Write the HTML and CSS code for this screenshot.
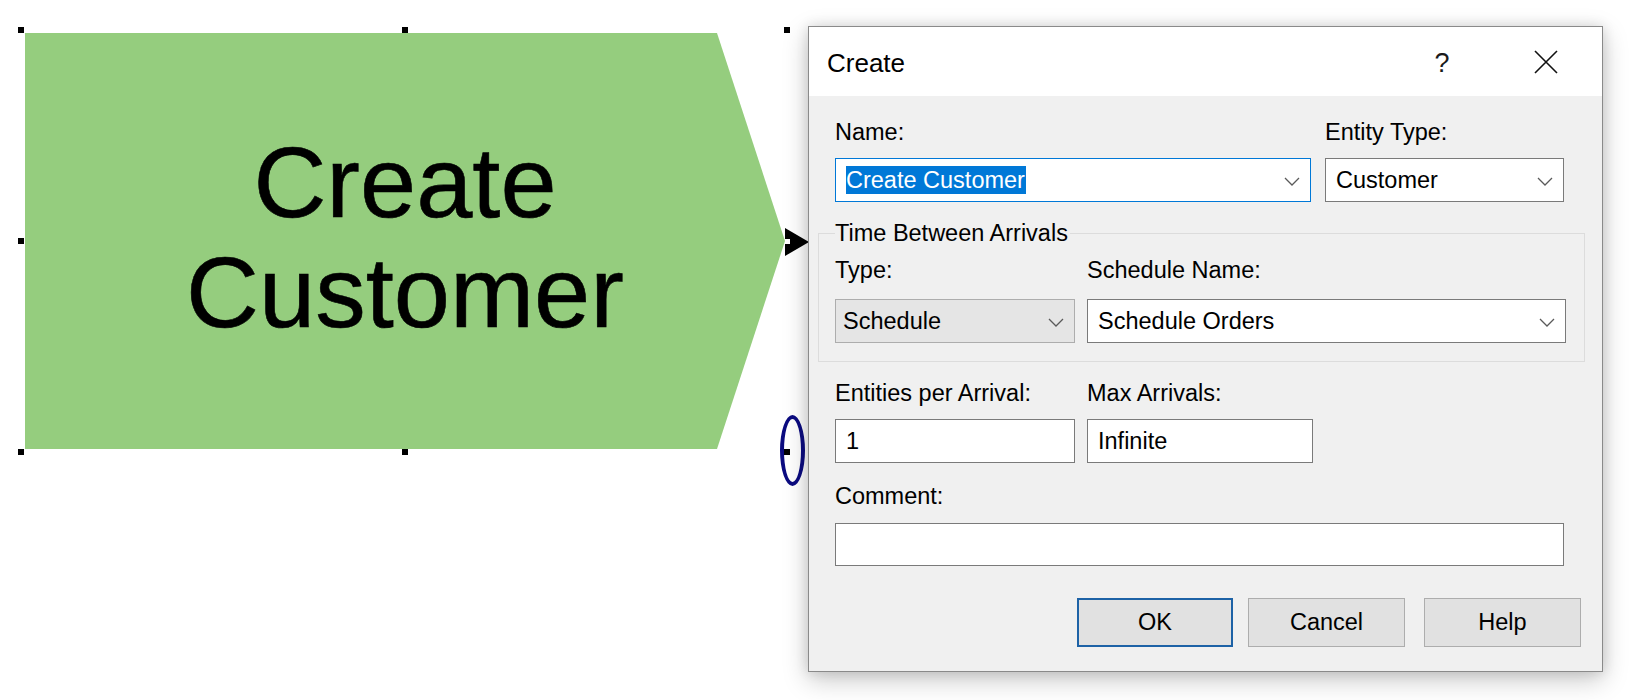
FILE: index.html
```html
<!DOCTYPE html>
<html lang="en">
<head>
<meta charset="utf-8">
<title>Create</title>
<link rel="stylesheet" href="styles.css">
</head>
<body>
<div class="canvas">
  <div class="module">
    <div class="shape">
      <div class="shape-text">Create<br>Customer</div>
    </div>
    <span class="handle h-tl"></span>
    <span class="handle h-tm"></span>
    <span class="handle h-tr"></span>
    <span class="handle h-ml"></span>
    <span class="handle h-bl"></span>
    <span class="handle h-bm"></span>
  </div>
  <div class="exit-arrow"><span class="exit-dot"></span></div>
  <div class="entry-ellipse"><span class="ellipse-dot"></span></div>

  <div class="dialog">
    <div class="titlebar">
      <span class="title">Create</span>
      <span class="title-help">?</span>
      <span class="title-close">
        <svg width="24" height="24" viewBox="0 0 24 24"><path d="M1 1 L23 23 M23 1 L1 23" stroke="#111" stroke-width="1.6" fill="none"/></svg>
      </span>
    </div>
    <div class="dlg-body">
      <div class="row">
        <div class="field w-name">
          <div class="lbl">Name:</div>
          <div class="combo focused">
            <span class="combo-text"><span class="sel">Create Customer</span></span>
            <svg class="chev" width="16" height="9" viewBox="0 0 16 9"><path d="M1 1 L8 8 L15 1" stroke="#5a5a5a" stroke-width="1.3" fill="none"/></svg>
          </div>
        </div>
        <div class="field w-entity">
          <div class="lbl">Entity Type:</div>
          <div class="combo">
            <span class="combo-text">Customer</span>
            <svg class="chev" width="16" height="9" viewBox="0 0 16 9"><path d="M1 1 L8 8 L15 1" stroke="#5a5a5a" stroke-width="1.3" fill="none"/></svg>
          </div>
        </div>
      </div>

      <fieldset class="group">
        <legend class="group-title">Time Between Arrivals</legend>
        <div class="row">
          <div class="field w-type">
            <div class="lbl lbl-type">Type:</div>
            <div class="combo list">
              <span class="combo-text tight">Schedule</span>
              <svg class="chev" width="16" height="9" viewBox="0 0 16 9"><path d="M1 1 L8 8 L15 1" stroke="#5a5a5a" stroke-width="1.3" fill="none"/></svg>
            </div>
          </div>
          <div class="field w-sched">
            <div class="lbl lbl-type">Schedule Name:</div>
            <div class="combo">
              <span class="combo-text">Schedule Orders</span>
              <svg class="chev" width="16" height="9" viewBox="0 0 16 9"><path d="M1 1 L8 8 L15 1" stroke="#5a5a5a" stroke-width="1.3" fill="none"/></svg>
            </div>
          </div>
        </div>
      </fieldset>

      <div class="row row-arrivals">
        <div class="field w-type">
          <div class="lbl">Entities per Arrival:</div>
          <div class="textbox">1</div>
        </div>
        <div class="field w-max">
          <div class="lbl">Max Arrivals:</div>
          <div class="textbox">Infinite</div>
        </div>
      </div>

      <div class="field w-comment row-comment">
        <div class="lbl">Comment:</div>
        <div class="textbox"></div>
      </div>

      <div class="buttons">
        <div class="btn btn-default">OK</div>
        <div class="btn btn-cancel">Cancel</div>
        <div class="btn btn-help">Help</div>
      </div>
    </div>
  </div>
</div>
</body>
</html>
```

FILE: styles.css
```css
* { box-sizing: border-box; }

html, body {
  margin: 0;
  padding: 0;
  background: #ffffff;
}

body {
  width: 1630px;
  height: 700px;
  overflow: hidden;
  font-family: "Liberation Sans", Arial, sans-serif;
  color: #000;
}

.canvas {
  position: relative;
  width: 1630px;
  height: 700px;
}

/* ---------- diagram module ---------- */
.module {
  position: absolute;
  left: 21px;
  top: 30px;
  width: 766px;
  height: 422px;
}

.shape {
  position: absolute;
  left: 4px;
  top: 3px;
  width: 760px;
  height: 416px;
  background: #95cd7e;
  clip-path: polygon(0 0, 692px 0, 100% 50%, 692px 100%, 0 100%);
  display: flex;
  align-items: center;
  justify-content: center;
  padding-bottom: 8px;
}

.shape-text {
  font-size: 101px;
  line-height: 110px;
  text-align: center;
  color: #000;
  -webkit-text-stroke: 0.6px #000;
}

.handle {
  position: absolute;
  width: 6px;
  height: 6px;
  background: #000;
  transform: translate(-50%, -50%);
}
.h-tl { left: 0; top: 0; }
.h-tm { left: 384px; top: 0; }
.h-tr { left: 766px; top: 0; }
.h-ml { left: 0; top: 211px; }
.h-bl { left: 0; top: 422px; }
.h-bm { left: 384px; top: 422px; }

.exit-arrow {
  position: absolute;
  left: 785px;
  top: 228px;
  width: 0;
  height: 0;
  border-top: 14px solid transparent;
  border-bottom: 14px solid transparent;
  border-left: 24px solid #000;
}
.exit-dot {
  position: absolute;
  left: -24px;
  top: -3px;
  width: 5px;
  height: 5px;
  background: #fff;
}

.entry-ellipse {
  position: absolute;
  left: 780px;
  top: 415px;
  width: 25px;
  height: 71px;
  border: 4px solid #0b0b80;
  border-radius: 50%;
}
.ellipse-dot {
  position: absolute;
  left: 0px;
  top: 30px;
  width: 6px;
  height: 6px;
  background: #000;
}

/* ---------- dialog ---------- */
.dialog {
  position: absolute;
  left: 808px;
  top: 26px;
  width: 795px;
  height: 646px;
  background: #f0f0f0;
  border: 1px solid #8a8a8a;
  box-shadow: 0 8px 24px rgba(0, 0, 0, 0.22), 0 0 12px rgba(0, 0, 0, 0.12);
  display: flex;
  flex-direction: column;
  z-index: 2;
}

.titlebar {
  height: 69px;
  background: #ffffff;
  display: flex;
  align-items: center;
  padding-left: 18px;
  flex: none;
}

.title {
  font-size: 26px;
  color: #000;
  flex: 1;
  padding-top: 4px;
}

.title-help {
  font-size: 27px;
  color: #1a1a1a;
  width: 26px;
  text-align: center;
  margin-right: 79px;
  padding-top: 4px;
}

.title-close {
  width: 24px;
  height: 24px;
  display: flex;
  margin-right: 44px;
}

.dlg-body {
  flex: 1;
  padding: 23px 0 0 26px;
  display: flex;
  flex-direction: column;
  font-size: 23.5px;
}

.row {
  display: flex;
  gap: 14px;
}

.field {
  display: flex;
  flex-direction: column;
}

.lbl {
  line-height: 27px;
  height: 27px;
  margin-bottom: 12px;
  color: #000;
  white-space: nowrap;
}
.lbl-type { margin-bottom: 15px; }

.w-name { width: 476px; }
.w-entity { width: 239px; }
.w-type { width: 240px; }
.w-sched { width: 479px; }
.w-max { width: 226px; }
.w-comment { width: 729px; }

.combo {
  height: 44px;
  background: #ffffff;
  border: 1px solid #7a7a7a;
  display: flex;
  align-items: center;
  padding: 0 10px 0 10px;
}
.combo.focused { border-color: #0078d7; }
.combo.list {
  background: #e5e5e5;
  border-color: #adadad;
  padding-left: 7px;
}

.combo-text {
  flex: 1;
  white-space: nowrap;
  line-height: 28px;
}

.sel {
  display: inline-block;
  background: #0078d7;
  color: #ffffff;
  line-height: 28px;
  padding-right: 1px;
}

.chev {
  flex: none;
  margin-top: 2px;
}

.textbox {
  height: 44px;
  background: #ffffff;
  border: 1px solid #7a7a7a;
  display: flex;
  align-items: center;
  padding: 0 10px;
  line-height: 28px;
  white-space: nowrap;
}

.row-comment .textbox { height: 43px; }

.group {
  margin: 18px 0 0 -17px;
  width: 767px;
  border: 1px solid #dcdcdc;
  padding: 10px 16px 18px 16px;
  min-width: 0;
}

.group .row { gap: 12px; }

.group-title {
  padding: 0 2px 0 0;
  line-height: 27px;
  font-size: 23.5px;
  color: #000;
}

.row-arrivals {
  margin-top: 18px;
  gap: 12px;
}
.row-arrivals .lbl { margin-bottom: 12px; }

.row-comment {
  margin-top: 20px;
}
.row-comment .lbl { margin-bottom: 13px; }

.buttons {
  display: flex;
  justify-content: flex-end;
  margin-top: 32px;
  padding-right: 21px;
}

.btn {
  width: 157px;
  height: 49px;
  background: #e1e1e1;
  border: 1px solid #adadad;
  display: flex;
  align-items: center;
  justify-content: center;
  color: #000;
}
.btn-default {
  width: 156px;
  border: 2px solid #1d62a6;
}
.btn-cancel { margin-left: 15px; }
.btn-help { margin-left: 19px; }
```
